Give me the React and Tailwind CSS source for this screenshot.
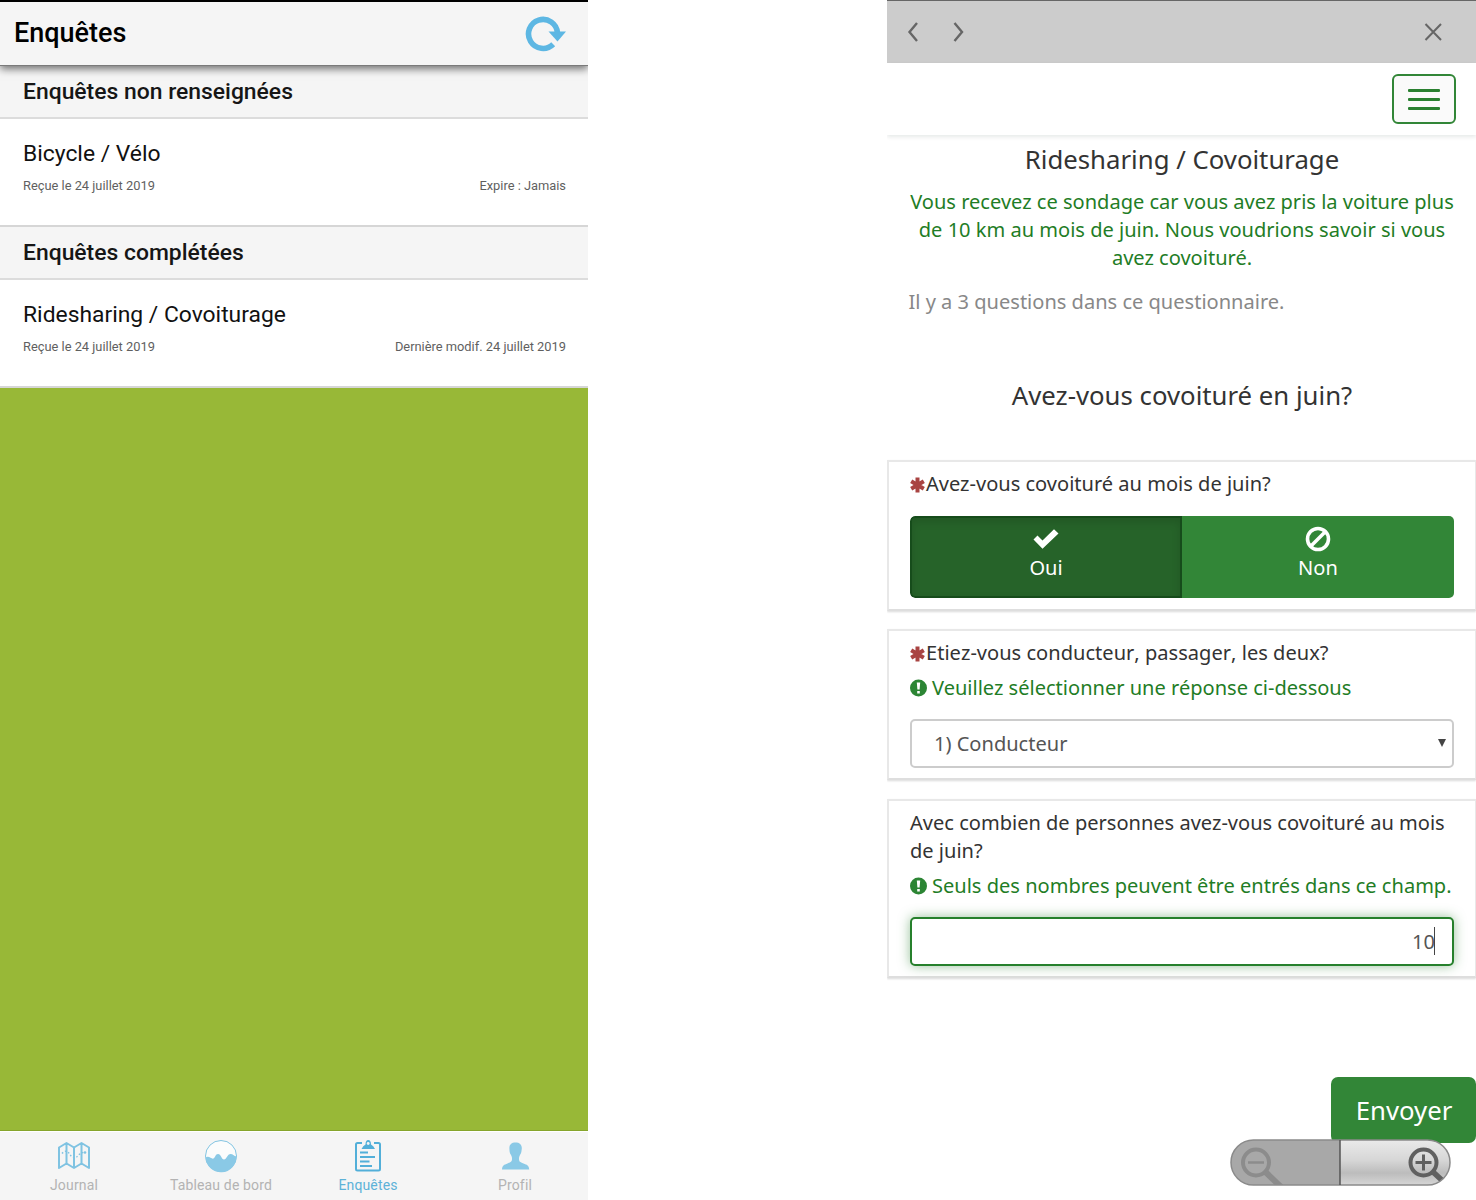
const ROBOTO = "font-['Roboto',sans-serif]";

function SectionHeader({ children, className }) {
  return (
    <div className={"border-b-2 border-[#dcdcdc] bg-[#f5f5f5] pl-[23px] text-[22.900px] font-medium leading-[50px] text-[#161616] " + className}>
      {children}
    </div>
  );
}

function SurveyItem({ title, received, status, className }) {
  return (
    <div className={"border-b-2 border-[#d6d6d6] bg-white pl-[23px] pr-[22px] " + className}>
      <div className="mt-[20px] text-[22.850px] leading-[30px] text-[#111]">{title}</div>
      <div className="mt-[7px] flex justify-between text-[12.850px] leading-5 text-[#5f5f5f]">
        <span>{received}</span>
        <span>{status}</span>
      </div>
    </div>
  );
}

function MapIcon() {
  return (
    <svg width="34" height="34" viewBox="0 0 34 34" fill="none" stroke="#7fc3e2" strokeWidth="2">
      <path d="M2 8.5 9.5 4 17 8.5 24.5 4 32 8.5V29L24.5 24.500 17 29 9.500 24.500 2 29Z M9.500 4V24M17 8.500V29M24.500 4V24" strokeLinejoin="round" />
      <path d="M5 14.500C8 11 11 12 12.500 15C15 19 19 20 22 15.500L27 13" strokeWidth="1.400" strokeDasharray="1.500 2" />
      <circle cx="28" cy="13.500" r="1.300" fill="#7fc3e2" stroke="none" />
    </svg>
  );
}

function DashboardIcon() {
  return (
    <svg width="34" height="34" viewBox="0 0 34 34">
      <circle cx="17" cy="17" r="15.500" fill="#fbfcfc" stroke="#82c4e2" strokeWidth="1" />
      <path d="M1.500 18.500C5 16 7.500 20.500 9.500 19.500C11.500 18 11.500 15 14 15C17 15 17.500 20.500 20 20.500C22.500 20.500 23.500 15 26.500 15C29.500 15 30 18 32.500 17A15.500 15.500 0 0 1 1.500 18.500Z" fill="#8ac9e6" />
    </svg>
  );
}

function SurveyIcon() {
  return (
    <svg width="34" height="34" viewBox="0 0 34 34" fill="none" stroke="#52afd9" strokeWidth="2">
      <path d="M11 4H6.500Q5 4 5 5.500V30Q5 31.500 6.500 31.500H27.500Q29 31.500 29 30V5.500Q29 4 27.500 4H23" />
      <path d="M10.500 10Q12 6.500 14.500 5.500Q14.500 1 17.200 1Q20 1 20 5.500Q22.500 6.500 24 10Z" fill="#52afd9" stroke="none" />
      <circle cx="17.200" cy="4.500" r="1.400" fill="#f5f5f5" stroke="none" />
      <path d="M9 13.500H17M9 18H24M9 22.500H18.500M9 27H21" />
    </svg>
  );
}

function ProfileIcon() {
  return (
    <svg width="34" height="34" viewBox="0 0 34 34" fill="#8ac9e6">
      <path d="M17.500 3.500C21.500 3.500 24 5.500 23.800 9.500C23.500 12 23.500 14 22 16C21 18 21 18.500 21 20C21 22.500 22 23 25.500 24.500C29 25.700 31 26.500 31.200 30.500H4C4.200 26.500 6 25.700 9.500 24.500C13 23 14 22.500 14 20C14 18.500 14 18 13 16C11.500 14 11.500 12 11.400 9.500C11.200 5.500 13.500 3.500 17.500 3.500Z" />
    </svg>
  );
}

function Tab({ icon, label, active }) {
  return (
    <div className="flex flex-1 flex-col items-center pt-[7px]">
      {icon}
      <div className={"mt-[2px] pl-px text-[14px] leading-5 tracking-[0.150px] " + (active ? "text-[#5db2d8]" : "text-[#b3b3b3]")}>
        {label}
      </div>
    </div>
  );
}

function SurveyListScreen() {
  return (
    <section className={"flex h-[1200px] w-[588px] flex-col overflow-hidden " + ROBOTO}>
      <header className="relative z-10 flex h-[66px] shrink-0 items-center justify-between border-b border-t-2 border-b-[#7a7a7a] border-t-black bg-[#f5f5f5] pl-[14px] pr-[22px] shadow-[0_3px_8px_rgba(0,0,0,0.55)]">
        <h1 className="-mt-px text-[27px] font-medium leading-[30px] text-black">Enquêtes</h1>
        <svg className="-mt-[2px]" width="42" height="38" viewBox="0 0 42 38" fill="none">
          <path d="M29.200 30.300A14.500 14.500 0 1 1 33.500 19" stroke="#5db7e3" strokeWidth="5.600" />
          <path d="M24.500 17.500H42L33.500 27.500Z" fill="#5db7e3" />
        </svg>
      </header>
      <SectionHeader className="h-[53px] shrink-0 pt-px">Enquêtes non renseignées</SectionHeader>
      <SurveyItem className="h-[108px] shrink-0" title="Bicycle / Vélo" received="Reçue le 24 juillet 2019" status="Expire : Jamais" />
      <SectionHeader className="h-[53px] shrink-0 pt-px">Enquêtes complétées</SectionHeader>
      <SurveyItem className="h-[108px] shrink-0" title="Ridesharing / Covoiturage" received="Reçue le 24 juillet 2019" status="Dernière modif. 24 juillet 2019" />
      <div className="flex-1 border-b border-[#86a52c] bg-[#98b837]" />
      <nav className="flex h-[69px] shrink-0 border-t border-white bg-[#f5f5f5]">
        <Tab icon={<MapIcon />} label="Journal" />
        <Tab icon={<DashboardIcon />} label="Tableau de bord" />
        <Tab icon={<SurveyIcon />} label="Enquêtes" active />
        <Tab icon={<ProfileIcon />} label="Profil" />
      </nav>
    </section>
  );
}

function Card({ children, className }) {
  return (
    <div className={"border-2 border-r border-[#e8e8e8] border-b-[#dedede] px-[21px] shadow-[0_1px_2px_rgba(0,0,0,0.15)] " + className}>
      {children}
    </div>
  );
}

function Question({ required, children }) {
  return (
    <div className="flex items-center whitespace-nowrap leading-[28px] text-[#333]">
      {required && (
        <svg className="mr-px mt-[2px] shrink-0" width="15" height="16" viewBox="0 0 15 16" stroke="#a94442" strokeWidth="4">
          <path d="M7.500 0.500V15.500M1.200 4.200 13.800 11.800M13.800 4.200 1.200 11.800" />
        </svg>
      )}
      <span>{children}</span>
    </div>
  );
}

function Help({ children }) {
  return (
    <div className="mt-[7px] flex items-center whitespace-nowrap leading-[28px] text-[#1f7d26]">
      <svg className="mr-[5px] shrink-0" width="17" height="18" viewBox="0 0 17 18">
        <circle cx="8.500" cy="9" r="8.500" fill="#2c8534" />
        <path d="M6.800 3.500H10.200L9.600 10.500H7.400ZM7.200 12H9.800V14.500H7.200Z" fill="#fff" />
      </svg>
      <span>{children}</span>
    </div>
  );
}

function ZoomControl() {
  return (
    <svg width="222" height="50" viewBox="0 0 222 50" fill="none">
      <defs>
        <linearGradient id="zoomIn" x1="0" y1="0" x2="0" y2="1">
          <stop offset="0" stopColor="#ececec" />
          <stop offset="0.450" stopColor="#d6d6d6" />
          <stop offset="0.700" stopColor="#bcbcbc" />
          <stop offset="1" stopColor="#dcdcdc" />
        </linearGradient>
        <clipPath id="pill"><rect x="1" y="2" width="219" height="45" rx="22.500" /></clipPath>
      </defs>
      <g clipPath="url(#pill)">
        <path d="M0 0H110V50H0Z" fill="#a8a8a8" />
        <path d="M110 0H222V50H110Z" fill="url(#zoomIn)" />
        <g stroke="#8c8c8c" strokeWidth="4">
          <circle cx="26" cy="24.500" r="13" />
          <path d="M18 24.500H34" strokeWidth="2.500" />
          <path d="M35 33.500 51 49" strokeWidth="6" />
        </g>
        <g stroke="#606060" strokeWidth="4">
          <circle cx="193.500" cy="24.500" r="13" />
          <path d="M185.500 24.500H201.500M193.500 16.500V32.500" strokeWidth="3" />
          <path d="M202 33 216 46" strokeWidth="5.500" />
        </g>
      </g>
      <rect x="1" y="2" width="219" height="45" rx="22.500" stroke="#8a8a8a" strokeWidth="1.500" />
      <path d="M110 2V47" stroke="#555" strokeWidth="1.500" />
    </svg>
  );
}

function QuestionnaireScreen() {
  return (
    <section className="relative flex h-[1200px] w-[589px] flex-col overflow-hidden font-['Noto_Sans',sans-serif] text-[20.060px]">
      <div className="flex h-[63px] shrink-0 items-center border-t border-[#666] bg-[#ccc] pl-[20px] pr-[34px]">
        <svg width="66" height="22" viewBox="0 0 66 22" fill="none" stroke="#666" strokeWidth="2.400">
          <path d="M10 2 2.500 11 10 20M47.500 2 55 11 47.500 20" />
        </svg>
        <svg className="ml-auto" width="18" height="18" viewBox="0 0 18 18" stroke="#666" strokeWidth="2">
          <path d="M1.500 1 17 17M17 1 1.500 17" />
        </svg>
      </div>
      <div className="flex h-[72px] shrink-0 justify-end pr-[20px] pt-[11px] shadow-[0_2px_4px_rgba(0,40,30,0.1)]">
        <div className="flex h-[50px] w-[64px] flex-col items-center justify-center gap-[6px] rounded-[6px] border-2 border-[#328637] bg-[#fafafa]">
          <div className="h-[3px] w-8 rounded-[1px] bg-[#2a8030]" />
          <div className="h-[3px] w-8 rounded-[1px] bg-[#2a8030]" />
          <div className="h-[3px] w-8 rounded-[1px] bg-[#2a8030]" />
        </div>
      </div>
      <h1 className="mt-[6px] pl-px text-center text-[25.750px] leading-[36px] text-[#333]">Ridesharing / Covoiturage</h1>
      <p className="mt-[11px] whitespace-nowrap pl-px text-center leading-[28.200px] text-[#1f7d26]">
        Vous recevez ce sondage car vous avez pris la voiture plus<br />
        de 10 km au mois de juin. Nous voudrions savoir si vous<br />
        avez covoituré.
      </p>
      <p className="mt-[15px] pl-[21.500px] leading-[28px] text-[#888]">Il y a 3 questions dans ce questionnaire.</p>
      <h2 className="mt-[61px] pl-px text-center text-[25.750px] leading-[36px] text-[#333]">Avez-vous covoituré en juin?</h2>
      <Card className="mt-[47px] h-[151px] shrink-0 pt-[8px]">
        <Question required>Avez-vous covoituré au mois de juin?</Question>
        <div className="mt-[18px] flex h-[82px] overflow-hidden rounded-[5px] text-white">
          <div className="flex w-[272px] flex-col items-center rounded-l-[5px] border-2 border-[#164c1b] bg-[#266329] pt-[11px] shadow-[inset_0_4px_8px_rgba(0,0,0,0.12)]">
            <svg width="26" height="20" viewBox="0 0 26 20"><path d="M.5 10.500 4.500 6.500 9.500 11.500 21 .3 25.500 4.500 9.500 19.700Z" fill="#fff" /></svg>
            <div className="mt-[5px] leading-[28px]">Oui</div>
          </div>
          <div className="flex flex-1 flex-col items-center bg-[#328637] pt-[10px]">
            <svg width="26" height="26" viewBox="0 0 26 26" fill="none" stroke="#fff" strokeWidth="3.600"><circle cx="13" cy="13" r="10.500" /><path d="M20 6 6 20" /></svg>
            <div className="mt-[2px] leading-[28px]">Non</div>
          </div>
        </div>
      </Card>
      <Card className="mt-[18px] h-[151px] shrink-0 pt-[8px]">
        <Question required><span className="tracking-[0.020px] [font-kerning:none]">Etiez-vous conducteur, passager, les deux?</span></Question>
        <Help>Veuillez sélectionner une réponse ci-dessous</Help>
        <div className="mt-[17px] flex h-[49px] items-center justify-between rounded-[5px] border-2 border-[#ccc] pl-[22px] pr-[5px] text-[#555]">
          <span className="mt-px">1) Conducteur</span>
          <svg width="10" height="8" viewBox="0 0 10 8"><path d="M1 0H9L5 8Z" fill="#444" /></svg>
        </div>
      </Card>
      <Card className="mt-[19px] h-[179px] shrink-0 pt-[8px]">
        <Question>Avec combien de personnes avez-vous covoituré au mois</Question>
        <Question>de juin?</Question>
        <Help>Seuls des nombres peuvent être entrés dans ce champ.</Help>
        <div className="mt-[17px] flex h-[49px] items-center justify-end rounded-[5px] border-2 border-[#26802c] bg-white pr-[17px] text-[#555] shadow-[0_0_12px_rgba(50,134,55,0.5)]">
          <span className="-mr-px mt-px">10</span>
          <span className="h-7 w-px bg-[#444]" />
        </div>
      </Card>
      <div className="ml-auto mt-[99px] h-[66px] w-[145px] shrink-0 rounded-[7px] bg-[#328637] pl-px text-center text-[25.750px] leading-[66px] text-white">Envoyer</div>
      <div className="absolute bottom-[12px] left-[343px]"><ZoomControl /></div>
    </section>
  );
}

export default function App() {
  return (
    <main className="flex h-[1200px] w-[1476px] justify-between overflow-hidden bg-white">
      <SurveyListScreen />
      <QuestionnaireScreen />
    </main>
  );
}
